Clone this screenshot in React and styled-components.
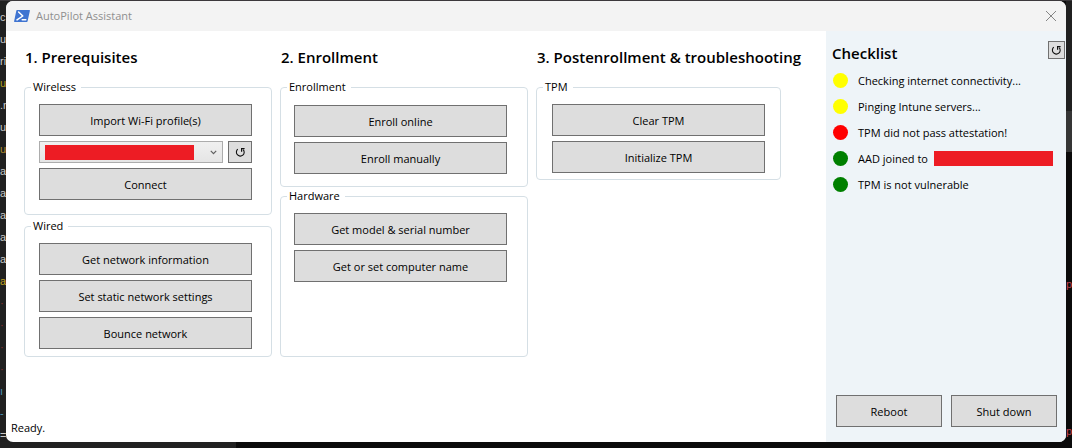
import React from "react";
import styled, { createGlobalStyle } from "styled-components";

const GlobalStyle = createGlobalStyle`
  *, *::before, *::after { box-sizing: border-box; }
  body {
    margin: 0;
    background: #0b0b0b;
    color: #000;
    font: 11px/16px "Open Sans", "Noto Sans", sans-serif;
  }
  button, select { font: inherit; color: inherit; }
`;

const Desktop = styled.div`
  display: grid;
  grid-template-columns: 6px minmax(0, 1fr) 6px;
  grid-template-rows: 1px minmax(0, 1fr) 6px;
  min-height: 100vh;
  background: linear-gradient(90deg, #202020 50%, #0b0b0b 50%);
`;

const TopEdge = styled.div`
  grid-column: 1 / -1;
  background: #3b383b;
`;

const CodeEdge = styled.div`
  display: flex;
  flex-direction: column;
  height: 0;
  min-height: 100%;
  overflow: hidden;
  padding-top: 5px;
  background: #202020;
  font: 11px/22px "Liberation Sans", sans-serif;
`;

const CodeLine = styled.span`
  flex: none;
  height: 22px;
  color: ${(p) => p.$color};
`;

const RightEdge = styled.div`
  display: flex;
  flex-direction: column;
  overflow: hidden;
  background: #0b0b0b;
  color: #c4414f;
  font: 11px/22px "Liberation Sans", sans-serif;
`;

const EdgeBlock = styled.div`
  flex: ${(p) => p.$size} 0 0;
  min-height: 0;
  display: flex;
  align-items: flex-end;
  background: ${(p) => p.$color};
`;

const BottomEdge = styled.div`
  grid-column: 1 / -1;
  background: linear-gradient(90deg, #212121 22%, #0b0b0b 22%);
`;

const Window = styled.section`
  display: flex;
  flex-direction: column;
  border-radius: 7px;
  overflow: hidden;
  background: #fff;
`;

const TitleBar = styled.header`
  display: flex;
  align-items: center;
  gap: 6px;
  height: 30px;
  padding: 0 8px;
  background: #f3f3f3;
  color: #8f8f8f;
`;

const Title = styled.h1`
  flex: 1;
  margin: 0;
  font-size: 11px;
  font-weight: 400;
`;

const CloseButton = styled.button`
  display: grid;
  place-items: center;
  padding: 0;
  width: 14px;
  height: 14px;
  border: 0;
  background: none;
  color: #858585;
`;

const Content = styled.div`
  flex: 1;
  display: grid;
  grid-template-columns: minmax(0, 1fr) 240px;
`;

const Main = styled.main`
  display: flex;
  flex-direction: column;
  justify-content: space-between;
  padding: 15px 45px 6px 5px;
`;

const Columns = styled.div`
  display: grid;
  grid-template-columns: 248fr 248fr 245fr;
  gap: 8px;
  padding-left: 13px;
`;

const Column = styled.section`
  display: flex;
  flex-direction: column;
  min-width: 0;
`;

const Heading = styled.h2`
  margin: 0;
  padding-left: 1px;
  font-size: 15px;
  line-height: 22px;
  font-weight: 600;
  white-space: nowrap;
`;

const Groups = styled.div`
  flex: 1;
  display: flex;
  flex-direction: column;
  gap: ${(p) => p.$gap || 3}px;
  padding-top: 11px;
`;

const Group = styled.fieldset`
  flex: ${(p) => (p.$grow ? 1 : "none")};
  min-width: 0;
  margin: 0;
  padding: 0;
  border: 1px solid #d5dfe5;
  border-radius: 4px;
`;

const Legend = styled.legend`
  margin-left: 6px;
  padding: 0 5px 0 2px;
`;

const Stack = styled.div`
  display: flex;
  flex-direction: column;
  gap: 5px;
  padding: ${(p) => p.$top || 9}px ${(p) => p.$right || 19}px ${(p) => p.$bottom}px ${(p) => p.$left || 14}px;
`;

const Button = styled.button`
  height: 32px;
  padding: 2px 0 0;
  border: 1px solid #707070;
  border-radius: 0;
  background: #ddd;
  white-space: nowrap;
`;

const RefreshButton = styled(Button)`
  display: grid;
  place-items: center;
  padding: 0;
  width: ${(p) => (p.$small ? 17 : 24)}px;
  height: ${(p) => (p.$small ? 18 : 22)}px;
`;

const ProfileRow = styled.div`
  display: flex;
  gap: 5px;
`;

const Combo = styled.div`
  position: relative;
  flex: 1;
  display: flex;
`;

const Select = styled.select`
  flex: 1;
  height: 22px;
  appearance: none;
  border: 1px solid #acacac;
  border-radius: 0;
  background: linear-gradient(#f0f0f0, #e5e5e5);
`;

const ComboFace = styled.div`
  position: absolute;
  inset: 0;
  display: flex;
  align-items: center;
  justify-content: space-between;
  padding: 0 6px;
  pointer-events: none;
`;

const Redacted = styled.span`
  width: ${(p) => p.$width}px;
  height: 15px;
  background: #ed1c24;
`;

const Status = styled.footer`
  line-height: 16px;
`;

const Sidebar = styled.aside`
  display: flex;
  flex-direction: column;
  padding-top: 10px;
  background: #eef4f8;
`;

const SidebarHead = styled.div`
  display: flex;
  justify-content: space-between;
  align-items: flex-start;
  padding: 0 1px 0 5px;
`;

const SidebarHeading = styled(Heading)`
  padding-top: 1px;
`;

const Checks = styled.ul`
  flex: 1;
  margin: 0;
  padding: 3px 7px;
  list-style: none;
`;

const Check = styled.li`
  display: flex;
  align-items: center;
  height: 26px;
  white-space: nowrap;
`;

const Dot = styled.span`
  flex: none;
  width: 15px;
  height: 15px;
  margin-right: 10px;
  border-radius: 50%;
  background: ${(p) => p.$color};
`;

const CheckText = styled.span`
  padding-top: 2px;
  margin-right: 6px;
`;

const PowerRow = styled.div`
  display: grid;
  grid-template-columns: 1fr 1fr;
  gap: 9px;
  padding: 0 9px 15px 10px;
`;

const codeLines = [
  ["c", "#c8c8c8"], ["u", "#c8c8c8"], ["ri", "#c8c8c8"], ["u", "#b09a1c"],
  [".r", "#c8c8c8"], ["u", "#c8c8c8"], ["u", "#b08a2c"], ["a", "#c8c8c8"],
  ["a", "#c8c8c8"], ["a", "#c8c8c8"], ["a", "#c8c8c8"], ["a", "#c8c8c8"],
  ["a", "#c0a020"], ["·", "#8f2f2f"], ["·", "#8f2f2f"], ["·", "#8f2f2f"],
  ["·", "#8f2f2f"], ["ı", "#4b94b5"], ["-", "#4b94b5"], ["=", "#c8c8c8"],
];

const checks = [
  ["yellow", "Checking internet connectivity..."],
  ["yellow", "Pinging Intune servers..."],
  ["red", "TPM did not pass attestation!"],
  ["green", "AAD joined to", 119],
  ["green", "TPM is not vulnerable"],
];

function PowerShellIcon() {
  return (
    <svg width="16" height="12" viewBox="0 0 16 12" aria-hidden="true">
      <path d="M3 0H15.4Q16 0 15.9 .7L13.6 11.2Q13.4 12 12.7 12H.6Q-.1 12 .1 11.2L2.3.7Q2.5 0 3 0Z" fill="#3f74d1" />
      <path d="M4.6 2L8.8 6L3 9.9M8.2 9.8H11.8" fill="none" stroke="#fff" strokeWidth="1.5" strokeLinecap="round" strokeLinejoin="round" />
    </svg>
  );
}

function RefreshIcon() {
  return (
    <svg width="11" height="11" viewBox="0 0 11 11" fill="none" stroke="#111" aria-hidden="true">
      <path d="M2.8 2.2A3.9 3.9 0 1 0 8.2 2.6" strokeWidth="1.1" />
      <path d="M6.6 4.8V1.6H9.6" strokeWidth="1.2" />
    </svg>
  );
}

export default function App() {
  return (
    <>
      <GlobalStyle />
      <Desktop>
        <TopEdge />
        <CodeEdge aria-hidden="true">
          {codeLines.map(([text, color], i) => (
            <CodeLine key={i} $color={color}>{text}</CodeLine>
          ))}
        </CodeEdge>
        <Window>
          <TitleBar>
            <PowerShellIcon />
            <Title>AutoPilot Assistant</Title>
            <CloseButton aria-label="Close">
              <svg width="12" height="12" viewBox="0 0 12 12" stroke="currentColor" aria-hidden="true">
                <path d="M1 1L11 11M11 1L1 11" />
              </svg>
            </CloseButton>
          </TitleBar>
          <Content>
            <Main>
              <Columns>
                <Column>
                  <Heading>1. Prerequisites</Heading>
                  <Groups>
                    <Group>
                      <Legend>Wireless</Legend>
                      <Stack $bottom={14}>
                        <Button>Import Wi-Fi profile(s)</Button>
                        <ProfileRow>
                          <Combo>
                            <Select aria-label="Wi-Fi profile" />
                            <ComboFace>
                              <Redacted $width={149} />
                              <svg width="7" height="5" viewBox="0 0 7 5" fill="none" stroke="#606060" aria-hidden="true">
                                <path d="M.8.8L3.5 3.6L6.2.8" strokeWidth="1.2" />
                              </svg>
                            </ComboFace>
                          </Combo>
                          <RefreshButton aria-label="Refresh profiles"><RefreshIcon /></RefreshButton>
                        </ProfileRow>
                        <Button>Connect</Button>
                      </Stack>
                    </Group>
                    <Group>
                      <Legend>Wired</Legend>
                      <Stack $bottom={7}>
                        <Button>Get network information</Button>
                        <Button>Set static network settings</Button>
                        <Button>Bounce network</Button>
                      </Stack>
                    </Group>
                  </Groups>
                </Column>
                <Column>
                  <Heading>2. Enrollment</Heading>
                  <Groups $gap={1}>
                    <Group>
                      <Legend>Enrollment</Legend>
                      <Stack $top={10} $bottom={12} $left={13} $right={20}>
                        <Button>Enroll online</Button>
                        <Button>Enroll manually</Button>
                      </Stack>
                    </Group>
                    <Group $grow>
                      <Legend>Hardware</Legend>
                      <Stack $bottom={7} $left={13} $right={20}>
                        <Button>Get model &amp; serial number</Button>
                        <Button>Get or set computer name</Button>
                      </Stack>
                    </Group>
                  </Groups>
                </Column>
                <Column>
                  <Heading>3. Postenrollment &amp; troubleshooting</Heading>
                  <Groups>
                    <Group>
                      <Legend>TPM</Legend>
                      <Stack $bottom={6} $left={15} $right={15}>
                        <Button>Clear TPM</Button>
                        <Button>Initialize TPM</Button>
                      </Stack>
                    </Group>
                  </Groups>
                </Column>
              </Columns>
              <Status>Ready.</Status>
            </Main>
            <Sidebar>
              <SidebarHead>
                <SidebarHeading>Checklist</SidebarHeading>
                <RefreshButton $small aria-label="Refresh checklist"><RefreshIcon /></RefreshButton>
              </SidebarHead>
              <Checks>
                {checks.map(([color, text, hidden]) => (
                  <Check key={text}>
                    <Dot $color={color} />
                    <CheckText>{text}</CheckText>
                    {hidden && <Redacted $width={hidden} />}
                  </Check>
                ))}
              </Checks>
              <PowerRow>
                <Button>Reboot</Button>
                <Button>Shut down</Button>
              </PowerRow>
            </Sidebar>
          </Content>
        </Window>
        <RightEdge aria-hidden="true">
          <EdgeBlock $size={110} $color="#202020" />
          <EdgeBlock $size={41} $color="#353535" />
          <EdgeBlock $size={143} $color="#0b0b0b">p</EdgeBlock>
          <EdgeBlock $size={147} $color="#0b0b0b">p</EdgeBlock>
        </RightEdge>
        <BottomEdge />
      </Desktop>
    </>
  );
}
